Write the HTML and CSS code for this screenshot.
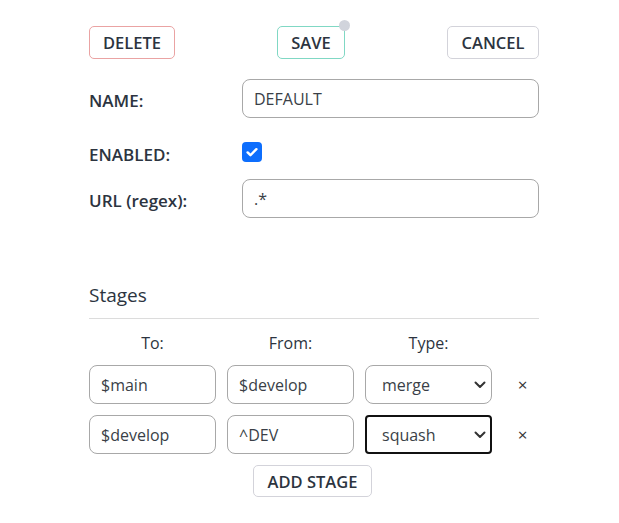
FILE: index.html
```html
<!DOCTYPE html>
<html>
<head>
<meta charset="utf-8">
<link rel="stylesheet" href="styles.css">
</head>
<body>
<div class="panel">
  <div class="actions">
    <button class="btn btn-delete">DELETE</button>
    <button class="btn btn-save">SAVE<span class="dot"></span></button>
    <button class="btn btn-cancel">CANCEL</button>
  </div>
  <div class="form-row">
    <label class="label">NAME:</label>
    <input class="field" type="text" value="DEFAULT">
  </div>
  <div class="form-row row-check">
    <label class="label">ENABLED:</label>
    <span class="check">
      <svg width="14" height="14" viewBox="0 0 16 16"><path d="M3 8.5l3.2 3.2L13 4.8" fill="none" stroke="#fff" stroke-width="2.8" stroke-linecap="round" stroke-linejoin="round"/></svg>
    </span>
  </div>
  <div class="form-row">
    <label class="label">URL (regex):</label>
    <input class="field" type="text" value=".*">
  </div>
  <h3 class="stages-title">Stages</h3>
  <div class="stages">
    <div class="head">To:</div>
    <div class="head">From:</div>
    <div class="head">Type:</div>
    <div></div>

    <input class="cell" type="text" value="$main">
    <input class="cell" type="text" value="$develop">
    <div class="select"><span>merge</span><svg width="12" height="8" viewBox="0 0 12 8"><path d="M1.5 1.5l4.5 4.5 4.5-4.5" fill="none" stroke="#333" stroke-width="2" stroke-linecap="round" stroke-linejoin="round"/></svg></div>
    <div class="remove">×</div>

    <input class="cell" type="text" value="$develop">
    <input class="cell" type="text" value="^DEV">
    <div class="select focused"><span>squash</span><svg width="12" height="8" viewBox="0 0 12 8"><path d="M1.5 1.5l4.5 4.5 4.5-4.5" fill="none" stroke="#333" stroke-width="2" stroke-linecap="round" stroke-linejoin="round"/></svg></div>
    <div class="remove">×</div>
  </div>
  <div class="add-row">
    <button class="btn btn-add">ADD STAGE</button>
  </div>
</div>
</body>
</html>
```

FILE: styles.css
```css
* { box-sizing: border-box; }
body {
  margin: 0;
  background: #fff;
  font-family: "Open Sans", "Noto Sans", sans-serif;
  color: #2c3440;
}
.panel {
  width: 450px;
  margin-left: 89px;
  padding-top: 26px;
}
.actions {
  display: flex;
  justify-content: space-between;
  align-items: center;
  height: 33px;
}
.btn {
  position: relative;
  height: 33px;
  padding: 0;
  background: #fff;
  border: 1px solid #d3d3da;
  border-radius: 5px;
  font-family: inherit;
  font-size: 16.5px;
  font-weight: 600;
  color: #2c3440;
}
.btn-delete { border-color: #eaa3a3; width: 86px; }
.btn-save { border-color: #80d8c4; width: 68px; }
.btn-cancel { width: 92px; }
.dot {
  position: absolute;
  right: -6px;
  top: -7px;
  width: 11px;
  height: 11px;
  border-radius: 50%;
  background: #d1d4dc;
}
.form-row {
  display: flex;
  align-items: center;
  margin-top: 20px;
}
.label {
  width: 153px;
  font-size: 17px;
  font-weight: 600;
  padding-top: 4px;
}
.field {
  width: 297px;
  height: 39px;
  border: 1px solid #a8a8a8;
  border-radius: 8px;
  padding: 0 11px;
  font-family: inherit;
  font-size: 16px;
  color: #3a3f47;
}
.row-check {
  margin-top: 24px;
  height: 20px;
}
.row-check + .form-row { margin-top: 17px; }
.check {
  width: 20px;
  height: 20px;
  border-radius: 4px;
  background: #0d6efd;
  display: flex;
  align-items: center;
  justify-content: center;
}
.stages-title {
  margin: 64px 0 0;
  font-size: 19px;
  font-weight: 400;
  line-height: 26px;
  padding-bottom: 10px;
  border-bottom: 1px solid #dcdcdc;
}
.stages {
  display: grid;
  grid-template-columns: 127px 127px 127px 1fr;
  column-gap: 11px;
  row-gap: 11px;
  margin-top: 13px;
  align-items: center;
}
.head {
  text-align: center;
  font-size: 16px;
  line-height: 22px;
  height: 22px;
}
.cell {
  width: 100%;
  height: 39px;
  border: 1px solid #a8a8a8;
  border-radius: 8px;
  padding: 0 11px;
  font-family: inherit;
  font-size: 16px;
  color: #3a3f47;
}
.select {
  height: 39px;
  border: 1px solid #a8a8a8;
  border-radius: 8px;
  padding: 0 5px 0 16px;
  display: flex;
  align-items: center;
  justify-content: space-between;
  font-size: 16px;
  color: #3a3f47;
}
.select.focused {
  border: 2px solid #111;
  border-radius: 4px;
  padding-left: 15px;
  padding-right: 4px;
}
.remove {
  text-align: center;
  font-size: 17px;
  color: #333;
  padding-left: 3px;
}
.add-row {
  display: flex;
  justify-content: center;
  margin-top: 11px;
  padding-right: 3px;
}
.btn-add { width: 119px; height: 32px; }
```
